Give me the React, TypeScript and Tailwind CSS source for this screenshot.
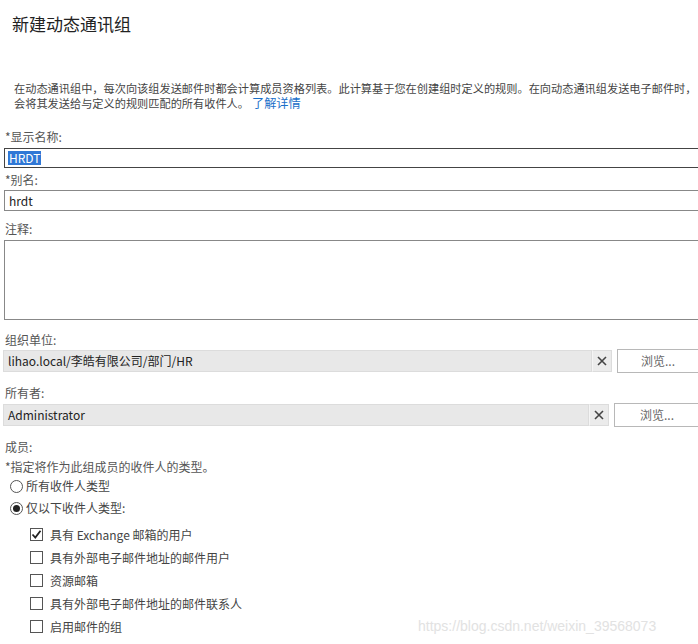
import { useState } from "react";

const font = { fontFamily: '"Segoe UI", "Noto Sans CJK SC", "Liberation Sans", sans-serif' };

const recipientTypes = [
  { label: "具有 Exchange 邮箱的用户", checked: true },
  { label: "具有外部电子邮件地址的邮件用户", checked: false },
  { label: "资源邮箱", checked: false },
  { label: "具有外部电子邮件地址的邮件联系人", checked: false },
  { label: "启用邮件的组", checked: false },
];

function Label({ text, className = "" }: { text: string; className?: string }) {
  return <div className={`h-[15px] leading-[15px] text-[12px] text-[#555] pl-[5px] ${className}`}>{text}</div>;
}

// gray read-only field + clear button + browse button
function PickerRow({ value, xLeft, btnWidth, className = "" }: { value: string; xLeft: number; btnWidth: number; className?: string }) {
  return (
    <div className={`flex items-center w-[760px] ${className}`}>
      <div
        className="h-[22px] shrink-0 flex items-center bg-[#e8e8e8] border border-[#dcdcdc] ml-[3px] pl-[4px] text-[12px] text-[#222]"
        style={{ width: xLeft - 3 }}
      >
        {value}
      </div>
      <div className="h-[22px] w-[20px] shrink-0 flex items-center justify-center bg-[#ebebeb] border border-[#dcdcdc] border-l-[#f5f5f5]">
        <svg width="10" height="10" viewBox="0 0 10 10">
          <path d="M1 1 L9 9 M9 1 L1 9" stroke="#444" strokeWidth="1.6" />
        </svg>
      </div>
      <button
        className="ml-[5px] h-[24px] shrink-0 border border-[#b8b8b8] bg-white text-[12px] text-[#666]"
        style={{ width: btnWidth }}
      >
        浏览...
      </button>
    </div>
  );
}

export default function App() {
  const [types, setTypes] = useState(recipientTypes);
  const [onlyTypes, setOnlyTypes] = useState(true);

  return (
    <div className="relative w-[698px] h-[644px] overflow-hidden bg-white" style={font}>
      <h1 className="pt-[12px] pl-[12px] h-[36px] leading-[24px] text-[17px] text-[#222]">新建动态通讯组</h1>

      <div className="mt-[45px] pl-[14px] text-[11.2px] text-[#444] whitespace-nowrap">
        <div className="h-[15px] leading-[15px]">在动态通讯组中，每次向该组发送邮件时都会计算成员资格列表。此计算基于您在创建组时定义的规则。在向动态通讯组发送电子邮件时，</div>
        <div className="h-[15px] leading-[15px] flex items-center">
          <span>会将其发送给与定义的规则匹配的所有收件人。</span>
          <a className="ml-[3px] text-[#1a6fc9] text-[12.2px] leading-[15px]">了解详情</a>
        </div>
      </div>

      <Label text="*显示名称:" className="mt-[18px]" />
      <div className="mt-[4px] ml-[4px] w-[710px] h-[20px] border border-[#444] flex items-center pl-[3px]">
        <span className="bg-[#3078d6] text-white text-[12px] leading-[14px] px-[1px]">HRDT</span>
      </div>
      <Label text="*别名:" className="mt-[4px]" />
      <div className="mt-[3px] ml-[4px] w-[710px] h-[21px] border border-[#888] flex items-center pl-[4px] text-[12px] text-[#222]">
        hrdt
      </div>

      <Label text="注释:" className="mt-[10px]" />
      <div className="mt-[4px] ml-[4px] w-[710px] h-[80px] border border-[#888]" />

      <Label text="组织单位:" className="mt-[12px]" />
      <PickerRow value="lihao.local/李皓有限公司/部门/HR" xLeft={592} btnWidth={82} className="mt-[2px]" />

      <Label text="所有者:" className="mt-[12px]" />
      <PickerRow value="Administrator" xLeft={589} btnWidth={86} className="mt-[3px]" />

      <Label text="成员:" className="mt-[12px]" />
      <Label text="*指定将作为此组成员的收件人的类型。" className="mt-[5px]" />

      <div className="mt-[1px] flex flex-col">
        <label className="h-[22px] flex items-center pl-[10px] text-[12px] text-[#444]" onClick={() => setOnlyTypes(false)}>
          <span className="w-[13px] h-[13px] rounded-full border border-[#555] flex items-center justify-center mr-[3px]">
            {!onlyTypes && <span className="w-[7px] h-[7px] rounded-full bg-[#222]" />}
          </span>
          所有收件人类型
        </label>
        <label className="h-[22px] flex items-center pl-[10px] text-[12px] text-[#444]" onClick={() => setOnlyTypes(true)}>
          <span className="w-[13px] h-[13px] rounded-full border border-[#555] flex items-center justify-center mr-[3px]">
            {onlyTypes && <span className="w-[7px] h-[7px] rounded-full bg-[#222]" />}
          </span>
          仅以下收件人类型:
        </label>
      </div>

      <div className="mt-[4px] flex flex-col">
        {types.map((t, i) => (
          <label
            key={t.label}
            className="h-[23px] flex items-center pl-[30px] text-[12px] text-[#444]"
            onClick={() => setTypes(types.map((x, j) => (j === i ? { ...x, checked: !x.checked } : x)))}
          >
            <span className="w-[13px] h-[13px] border border-[#555] bg-white flex items-center justify-center mr-[7px]">
              {t.checked && (
                <svg width="11" height="11" viewBox="0 0 11 11">
                  <path d="M1.5 5.5 L4.3 8.5 L9.5 1.8" stroke="#222" strokeWidth="1.8" fill="none" />
                </svg>
              )}
            </span>
            {t.label}
          </label>
        ))}
      </div>

      <div
        className="absolute left-[418px] top-[616px] text-[14px] text-[#e2e2e2] whitespace-nowrap"
        style={{ fontFamily: '"Liberation Sans", Arial, sans-serif' }}
      >
        https://blog.csdn.net/weixin_39568073
      </div>
    </div>
  );
}
